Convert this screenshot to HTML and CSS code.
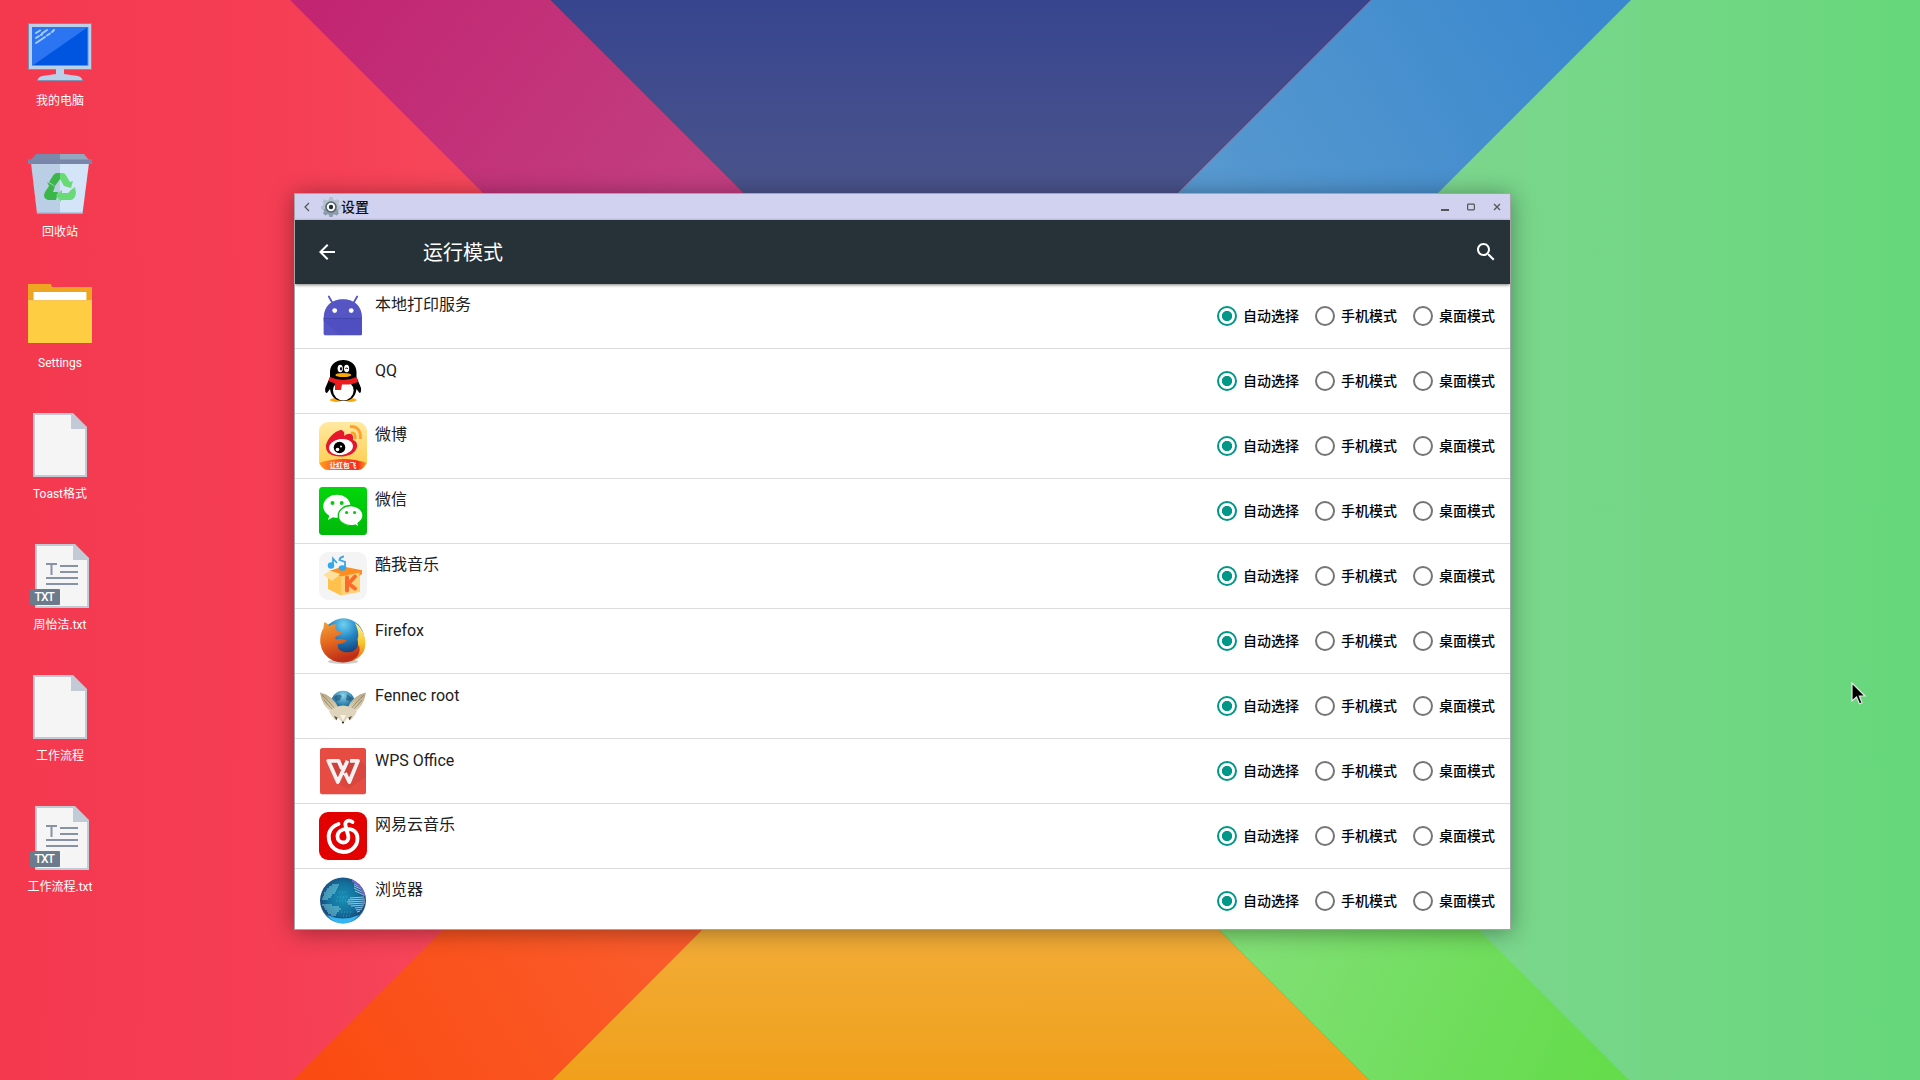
FILE: index.html
```html
<!DOCTYPE html>
<html lang="zh-CN">
<head>
<meta charset="utf-8">
<title>设置</title>
<link rel="stylesheet" href="styles.css">
</head>
<body>
<svg class="wallpaper" viewBox="0 0 1920 1080" aria-hidden="true">
  <defs>
    <linearGradient id="wRed"><stop offset="0" stop-color="#f4394f"/><stop offset=".5" stop-color="#f53d53"/><stop offset="1" stop-color="#f7495b"/></linearGradient>
    <linearGradient id="wGreen"><stop offset="0" stop-color="#7fd690"/><stop offset="1" stop-color="#66d77a"/></linearGradient>
    <linearGradient id="wBlue" gradientUnits="userSpaceOnUse" x1="0" y1="0" x2="0" y2="193"><stop offset="0" stop-color="#37458f"/><stop offset="1" stop-color="#4a548b"/></linearGradient>
    <linearGradient id="wYellow" gradientUnits="userSpaceOnUse" x1="0" y1="930" x2="0" y2="1080"><stop offset="0" stop-color="#f2ac37"/><stop offset="1" stop-color="#f0a01b"/></linearGradient>
    <linearGradient id="wMagenta" gradientUnits="userSpaceOnUse" x1="340" y1="0" x2="640" y2="240"><stop offset="0" stop-color="#c22673"/><stop offset="1" stop-color="#c23e80"/></linearGradient>
    <linearGradient id="wSky" gradientUnits="userSpaceOnUse" x1="1590" y1="0" x2="1240" y2="220"><stop offset="0" stop-color="#3a88ce"/><stop offset="1" stop-color="#5698cf"/></linearGradient>
    <linearGradient id="wOrange" gradientUnits="userSpaceOnUse" x1="330" y1="1080" x2="620" y2="900"><stop offset="0" stop-color="#fa4c12"/><stop offset="1" stop-color="#fa5b2b"/></linearGradient>
    <linearGradient id="wLime" gradientUnits="userSpaceOnUse" x1="1270" y1="920" x2="1600" y2="1080"><stop offset="0" stop-color="#80df74"/><stop offset="1" stop-color="#64dc4b"/></linearGradient>
  </defs>
  <rect width="520" height="1080" fill="url(#wRed)"/>
  <rect x="1400" width="520" height="1080" fill="url(#wGreen)"/>
  <path d="M550 0H1371L1111 260H810Z" fill="url(#wBlue)"/>
  <path d="M552 1080L851 780H1069L1369 1080Z" fill="url(#wYellow)"/>
  <path d="M290 0H550L810 260H550Z" fill="url(#wMagenta)"/>
  <path d="M1371 0H1631L1371 260H1111Z" fill="url(#wSky)"/>
  <path d="M293 1080L553 820H812L552 1080Z" fill="url(#wOrange)"/>
  <path d="M1629 1080L1369 820H1109L1369 1080Z" fill="url(#wLime)"/>
</svg>

<svg class="defs" aria-hidden="true">
  <symbol id="doc" viewBox="0 0 64 64">
    <path d="M5 0H45L59 14V64H5Z" fill="#c2cad5"/>
    <path d="M7 2H43V16H57V62H7Z" fill="#f5f5f5"/>
  </symbol>
  <symbol id="txt" viewBox="0 0 64 64">
    <path d="M7 0H47L61 14V64H7Z" fill="#c2cad5"/>
    <path d="M9 2H45V16H59V62H9Z" fill="#f5f5f5"/>
    <path d="M18 20H29M23.500 20V31M32 22H50M32 28H50M18 34H50M18 40H50" fill="none" stroke="#8792a6" stroke-width="2"/>
    <rect x="2" y="45" width="30" height="16" rx="1" fill="#6c7b8b"/>
  </symbol>
</svg>

<main class="desktop">
  <nav class="shortcuts">
    <a class="shortcut">
      <svg class="shortcut-icon" viewBox="0 0 64 64">
        <path d="M.5 3.500H63.500V49.500H.5Z" fill="#bacfe8" stroke="#7c8bb0"/>
        <path d="M28 49H36V54L50 56Q54 57 54.500 60.500H9.500Q10 57 14 56L28 54Z" fill="#bacfe8"/>
        <path d="M9 60.500H55" stroke="#8291b3"/>
        <path d="M4 7H60V46H4Z" fill="#2b75f2"/><path d="M60 7V46H4Z" fill="#0055e0"/>
        <path d="M4 45.500H60V7" fill="none" stroke="#5995ef"/>
        <path d="M8 13L12 10.500M14 13.500L19 10M8 18L11 16M13 15L14 14.500M8 23L17 17M19 15.500L22 13.500M24 12L26 10" stroke="#a5cbff" stroke-width="2" stroke-linecap="round"/>
      </svg>
      <span class="shortcut-label">我的电脑</span>
    </a>
    <a class="shortcut">
      <svg class="shortcut-icon" viewBox="0 0 64 64">
        <path d="M3 12H32V62.500H9Z" fill="#bacfe5"/><path d="M32 12H61L54.500 62.500H32Z" fill="#d4e4f9"/>
        <path d="M9 62H55" stroke="#95a9c6"/>
        <path d="M8 3H32V9H3Z" fill="#7a89a9"/><path d="M32 3H56L61 9H32Z" fill="#93a7bf"/><path d="M0 8.500H64V13H0Z" fill="#7887a9"/>
        <path d="M29 22H32V28L27 35L21 31L25.500 24Q27 22 29 22ZM19 31L27 35.500L25 41H30L28 49H20Q14 47 17 41L21 35Z" fill="#3cb54a"/>
        <path d="M32 22H35Q37 22 38.500 25L42 31L45 30L43 37L36 35L32 28ZM43 39L47 36L48 42Q47 48 43 49H33V51L28 44L34 39V42H40Z" fill="#68da76"/>
      </svg>
      <span class="shortcut-label">回收站</span>
    </a>
    <a class="shortcut">
      <svg class="shortcut-icon" viewBox="0 0 64 64">
        <path d="M0 2H23L24 5H64V30H0Z" fill="#eea522"/><path d="M5 10H59V20H5Z" fill="#f8c968"/><path d="M6 10H58V20H6Z" fill="#fff"/>
        <path d="M0 18H64V61H0Z" fill="#ffcd42"/><path d="M0 18.500H64" stroke="#f7c458"/>
      </svg>
      <span class="shortcut-label">Settings</span>
    </a>
    <a class="shortcut"><svg class="shortcut-icon"><use href="#doc"/></svg><span class="shortcut-label">Toast格式</span></a>
    <a class="shortcut"><svg class="shortcut-icon"><use href="#txt"/><text x="6.500" y="57" class="txt-tag">TXT</text></svg><span class="shortcut-label">周怡洁.txt</span></a>
    <a class="shortcut"><svg class="shortcut-icon"><use href="#doc"/></svg><span class="shortcut-label">工作流程</span></a>
    <a class="shortcut"><svg class="shortcut-icon"><use href="#txt"/><text x="6.500" y="57" class="txt-tag">TXT</text></svg><span class="shortcut-label">工作流程.txt</span></a>
  </nav>

  <section class="window">
    <header class="titlebar">
      <svg class="tb-back" width="8" height="10" viewBox="0 0 8 10"><path d="M6 1L2 5L6 9" fill="none" stroke="#555" stroke-width="1.200"/></svg>
      <svg class="tb-gear" width="20" height="20" viewBox="0 0 20 20">
        <path d="M8.300 0H11.700L12.200 2.500L14.500 3.500L16.600 2L18.600 4.500L17.300 6.500L17.800 8.200L20 9V12L17.700 12.600L16.900 14.400L17.900 16.500L15.600 18.400L13.600 17.200L12 17.800L11.500 20H8.500L8 17.800L6.400 17.200L4.400 18.400L2.100 16.500L3.100 14.400L2.300 12.600L0 12V9L2.200 8.200L2.700 6.500L1.400 4.500L3.400 2L5.500 3.500L7.800 2.500Z" fill="#b3c1cc"/>
        <path d="M2.300 12H17.700L16.900 14.400L17.900 16.500L15.600 18.400L13.600 17.200L12 17.800L11.500 20H8.500L8 17.800L6.400 17.200L4.400 18.400L2.100 16.500L3.100 14.400Z" fill="#8b9cab"/>
        <circle cx="10" cy="10" r="5" fill="#fff" stroke="#53606c" stroke-width="1.600"/><circle cx="10" cy="10" r="2.200" fill="#222b33"/>
      </svg>
      <h1 class="tb-title">设置</h1>
      <svg class="tb-controls" width="60" height="10" viewBox="0 0 60 10" fill="none" stroke="#555">
        <path d="M0 8H8" stroke-width="2"/><rect x="26.600" y="2.100" width="6.800" height="5.800" rx=".8" stroke-width="1.200"/><path d="M53 2L59 8M59 2L53 8" stroke-width="1.300"/>
      </svg>
    </header>

    <div class="appbar">
      <svg class="appbar-icon" viewBox="0 0 24 24"><path d="M20 11H7.830l5.590-5.590L12 4l-8 8 8 8 1.410-1.410L7.830 13H20v-2z"/></svg>
      <h2 class="appbar-title">运行模式</h2>
      <svg class="appbar-icon" viewBox="0 0 24 24"><path d="M15.500 14h-.79l-.28-.27C15.410 12.590 16 11.110 16 9.500 16 5.910 13.090 3 9.500 3S3 5.910 3 9.500 5.910 16 9.500 16c1.610 0 3.090-.59 4.230-1.570l.27.28v.79l5 4.990L20.490 19l-4.990-5zm-6 0C7.010 14 5 11.990 5 9.500S7.010 5 9.500 5 14 7.010 14 9.500 11.990 14 9.500 14z"/></svg>
    </div>

    <ul class="apps">
      <li class="app">
        <svg class="app-icon" viewBox="0 0 48 48">
          <path d="M4.700 26C4.700 14 13 7.300 24 7.300S43 14 43 26V42Q43 43.800 41.500 43.800H6.200Q4.700 43.800 4.700 42Z" fill="#25258a" opacity=".3"/>
          <path d="M4.700 26C4.700 14 13 7.300 24 7.300S43 14 43 26V41.500Q43 43 41.500 43H6.200Q4.700 43 4.700 41.500Z" fill="#5556c4"/>
          <path d="M4.700 26.500H43V41.500Q43 43 41.500 43H20L4.700 29Z" fill="#4f4fc2"/><path d="M4.700 26.500H43" stroke="#4142a8" stroke-width=".8"/>
          <path d="M9.800 4.500L13.500 11M38.200 4.500L34.500 11" stroke="#5556c4" stroke-width="1.800" stroke-linecap="round"/>
          <circle cx="15.700" cy="18.600" r="2.400" fill="#fff"/><circle cx="32.200" cy="18.600" r="2.400" fill="#fff"/>
        </svg>
        <span class="app-name">本地打印服务</span>
        <div class="modes"><label class="mode on">自动选择</label><label class="mode">手机模式</label><label class="mode">桌面模式</label></div>
      </li>
      <li class="app">
        <svg class="app-icon" viewBox="0 0 48 48">
          <ellipse cx="17" cy="43" rx="6" ry="1.900" fill="#fba90a"/><ellipse cx="31.500" cy="43" rx="6" ry="1.900" fill="#fba90a"/>
          <path d="M24.300 3C31 3 37.500 7 37.500 15V20L42 31Q42.500 36 40.500 36L37.500 32Q36 44 24.300 44T11 32L8 36Q5.500 36 6.300 31L11 20V15C11 7 17.500 3 24.300 3Z" fill="#000"/>
          <ellipse cx="24.300" cy="33.500" rx="10.300" ry="10" fill="#fff"/>
          <path d="M11 20Q24 26 37.500 20L39 25Q33 28 23 27.500L22 33H16V26.500L9.300 24Z" fill="#ed1c1f"/>
          <ellipse cx="21.200" cy="11.500" rx="2.600" ry="3.800" fill="#fff"/><ellipse cx="27.600" cy="11.500" rx="2.600" ry="3.800" fill="#fff"/>
          <ellipse cx="22" cy="11.700" rx="1" ry="1.700"/><path d="M26.500 12Q27.500 9.500 28.800 12" fill="none" stroke="#000"/>
          <ellipse cx="24.300" cy="18" rx="8" ry="2.100" fill="#fba90a"/>
        </svg>
        <span class="app-name latin">QQ</span>
        <div class="modes"><label class="mode on">自动选择</label><label class="mode">手机模式</label><label class="mode">桌面模式</label></div>
      </li>
      <li class="app">
        <svg class="app-icon" viewBox="0 0 48 48">
          <defs><linearGradient id="wb" x1="0" y1="0" x2="0" y2="1"><stop offset="0" stop-color="#ffe9a2"/><stop offset="1" stop-color="#ffcb46"/></linearGradient><clipPath id="wbClip"><rect width="48" height="48" rx="9"/></clipPath>
          <linearGradient id="wbBanner"><stop offset="0" stop-color="#ff9a1c"/><stop offset=".5" stop-color="#fb4b22"/><stop offset=".8" stop-color="#f52a24"/><stop offset="1" stop-color="#ffa41c"/></linearGradient></defs>
          <rect width="48" height="48" rx="9" fill="url(#wb)"/>
          <path d="M0 41Q24 33 48 41L42 48H6Z" fill="url(#wbBanner)" clip-path="url(#wbClip)"/>
          <path d="M7 25C7 17 17 8 22.500 8C25 9 26 11 25 14C29 11 34 11 34 15V18C37 19 38.500 21 38 25C36 32 29 34.500 21 34.500C13 34.500 7 31 7 25Z" fill="#e6162d"/>
          <ellipse cx="22" cy="25" rx="12" ry="8" fill="#fff" transform="rotate(-7 22 25)"/><circle cx="20.500" cy="25.500" r="5.800"/><circle cx="18.500" cy="27.500" r="1.800" fill="#fff"/><circle cx="22" cy="24.500" r="1" fill="#fff"/>
          <path d="M31 4.500Q42 4 41.500 17M32 11Q37 10 36 17" fill="none" stroke="#ff9f2e" stroke-width="2.800"/>
          <text x="24" y="45.700" class="wb-text">让红包飞</text>
        </svg>
        <span class="app-name">微博</span>
        <div class="modes"><label class="mode on">自动选择</label><label class="mode">手机模式</label><label class="mode">桌面模式</label></div>
      </li>
      <li class="app">
        <svg class="app-icon" viewBox="0 0 48 48">
          <defs><linearGradient id="wx" x1="0" y1="0" x2="0" y2="1"><stop offset="0" stop-color="#00d70a"/><stop offset="1" stop-color="#00b90a"/></linearGradient></defs>
          <rect width="48" height="48" rx="3.500" fill="url(#wx)"/>
          <path d="M18 7.800C25.500 7.800 31.500 12.700 31.500 19.500S25.500 30.800 18 30.800Q16 30.800 14 30.300L9 33L10.300 28.800Q4.300 25 4.300 19.500C4.300 12.700 10.500 7.800 18 7.800Z" fill="#fff"/>
          <path d="M31.700 18.500C38.500 18.500 44 23 44 28.700Q44 32.500 39 36.300L40 40L36 38Q34 38.600 31.700 38.600C25 38.600 19.300 34.500 19.300 28.700S25 18.500 31.700 18.500Z" fill="#fff" stroke="#00c60a" stroke-width="1.300"/>
          <g fill="#07c910"><circle cx="13.500" cy="16" r="2"/><circle cx="22.700" cy="16" r="2"/><circle cx="27.600" cy="25.500" r="1.600"/><circle cx="35.600" cy="25.500" r="1.600"/></g>
        </svg>
        <span class="app-name">微信</span>
        <div class="modes"><label class="mode on">自动选择</label><label class="mode">手机模式</label><label class="mode">桌面模式</label></div>
      </li>
      <li class="app">
        <svg class="app-icon" viewBox="0 0 48 48">
          <rect width="48" height="48" rx="9" fill="#f4f4f4"/>
          <path d="M10 19L24 14.500L42 18L41 22L22 25Z" fill="#ff8c1f"/>
          <path d="M9 25L22 24V43.500L9 37Z" fill="#ffc14b"/><path d="M22 24.500L41 20.500V40L22 43.500Z" fill="#ffd27a"/>
          <path d="M11 18.500L4.500 23L13 29L21.500 22Z" fill="#ffe09a"/><path d="M41 18H43V22L40 24Z" fill="#ff8c2a"/>
          <path d="M28 25.500V38.500M36 24.500L29.500 31.500L36 36.500" fill="none" stroke="#fb6a2b" stroke-width="4" stroke-linecap="round" stroke-linejoin="round"/>
          <g fill="none" stroke="#38a7e8" stroke-width="1.800"><path d="M14 14V6.500L18 11M26 16V10L20.500 8Q21 5 25 4.500"/></g>
          <g fill="#2faaf0"><circle cx="12" cy="13.500" r="3.200"/><ellipse cx="23.500" cy="16" rx="3.800" ry="2.800"/></g>
        </svg>
        <span class="app-name">酷我音乐</span>
        <div class="modes"><label class="mode on">自动选择</label><label class="mode">手机模式</label><label class="mode">桌面模式</label></div>
      </li>
      <li class="app">
        <svg class="app-icon" viewBox="0 0 48 48">
          <defs><radialGradient id="ffB" cx=".5" cy=".15" r=".75"><stop offset="0" stop-color="#6fd0f2"/><stop offset=".45" stop-color="#2586c4"/><stop offset="1" stop-color="#12376f"/></radialGradient>
          <linearGradient id="ffO" x1="0" y1="0" x2=".3" y2="1"><stop offset="0" stop-color="#f3a13c"/><stop offset=".5" stop-color="#e56a1f"/><stop offset="1" stop-color="#bf2f17"/></linearGradient>
          <linearGradient id="ffY" x1="0" y1="0" x2="0" y2="1"><stop offset="0" stop-color="#fff4a0"/><stop offset=".5" stop-color="#f9c62c"/><stop offset="1" stop-color="#e3661d"/></linearGradient></defs>
          <ellipse cx="24" cy="44.500" rx="15" ry="2.500" fill="#000" opacity=".2"/>
          <circle cx="24.500" cy="22" r="20.700" fill="url(#ffB)"/>
          <path d="M36 6C44 11 49 23 45 34C40 43 31 46 23 45C34 42 41 34 38.500 22Q41 17 36 6Z" fill="url(#ffY)"/>
          <path d="M5 5.500Q8 5 10 9Q14 6.500 17.500 7.500Q15 10 18 14L23 14.500Q23 17 18 19Q15 21 17 22.500Q23 21 28 23.500Q24 27 19 27Q17 32 25 35Q35 37 40 28Q43 38 33 43.500Q24 47 15 44Q3 39 1.300 26Q.7 17 4.500 11Z" fill="url(#ffO)"/>
        </svg>
        <span class="app-name latin">Firefox</span>
        <div class="modes"><label class="mode on">自动选择</label><label class="mode">手机模式</label><label class="mode">桌面模式</label></div>
      </li>
      <li class="app">
        <svg class="app-icon" viewBox="0 0 48 48">
          <defs><radialGradient id="fnB" cx=".5" cy=".2" r=".8"><stop offset="0" stop-color="#8cd6ef"/><stop offset=".5" stop-color="#2f80ab"/><stop offset="1" stop-color="#0f3354"/></radialGradient>
          <linearGradient id="fnE" x1="0" y1="0" x2="0" y2="1"><stop offset="0" stop-color="#b5a582"/><stop offset="1" stop-color="#e6dcc4"/></linearGradient></defs>
          <circle cx="24" cy="20.500" r="11.800" fill="url(#fnB)"/><path d="M15 15Q20 11 23 14L21 18L17 19ZM28 12L33 16L31 19L27 18Z" fill="#123e60" opacity=".5"/>
          <path d="M1 10.500Q14 13 20 27L14 31Q3 25 1 10.500ZM47 10.500Q34 13 28 27L34 31Q45 25 47 10.500Z" fill="url(#fnE)"/>
          <path d="M3 13Q10 19 16 27M5 18Q9 23 14 28M45 13Q38 19 32 27M43 18Q39 23 34 28" stroke="#8d7c5e" stroke-width=".8" fill="none"/>
          <path d="M10 29L17 25Q24 22 31 25L38 29L36 33L32 38L28.500 36L24 41.500L19.500 36L16 38L12 33Z" fill="#dfd4bc"/>
          <path d="M15 34L18.500 35.500L17.500 38.500ZM33 34L29.500 35.500L30.500 38.500Z" fill="#56493a"/><path d="M21 33H27L24 39Z" fill="#f7f2e8"/><circle cx="24" cy="40.500" r="1" fill="#222"/>
        </svg>
        <span class="app-name latin">Fennec root</span>
        <div class="modes"><label class="mode on">自动选择</label><label class="mode">手机模式</label><label class="mode">桌面模式</label></div>
      </li>
      <li class="app">
        <svg class="app-icon" viewBox="0 0 48 48">
          <rect x="1" y="1.600" width="46" height="46" rx="2.500" fill="#a23a32" opacity=".5"/><rect x="1" y="1" width="46" height="46" rx="2.500" fill="#e64c41"/>
          <path d="M41 13L47 19V30L29 42L20 37Z" fill="#c9413a" opacity=".4"/>
          <path d="M11 14H37L30 34L25 27L19 34Z" fill="#cf4038"/>
          <path d="M23 22L19.500 13.800H9.300L18.800 35L28.500 13.800M31 13.800H39L30.300 35L26 26" fill="none" stroke="#f6f1f3" stroke-width="3.800" stroke-linejoin="round"/>
        </svg>
        <span class="app-name latin">WPS Office</span>
        <div class="modes"><label class="mode on">自动选择</label><label class="mode">手机模式</label><label class="mode">桌面模式</label></div>
      </li>
      <li class="app">
        <svg class="app-icon" viewBox="0 0 48 48">
          <rect width="48" height="48" rx="9" fill="#e20000"/>
          <path d="M19.500 12C12 14.500 8.500 21 10 28C11.500 35.500 18 40 24.500 40C32 40 38.500 34.500 38.500 26.500C38.500 20 34 16.800 28 16.800C22 16.800 18.500 20.500 18.500 24.500C18.500 28 21 30.500 24 30.500C28 30.500 30 27.500 29.300 24L26.500 13.500C25.500 9.500 29.500 7 33.500 10" fill="none" stroke="#fff" stroke-width="3.800" stroke-linecap="round"/>
        </svg>
        <span class="app-name">网易云音乐</span>
        <div class="modes"><label class="mode on">自动选择</label><label class="mode">手机模式</label><label class="mode">桌面模式</label></div>
      </li>
      <li class="app">
        <svg class="app-icon" viewBox="0 0 48 48">
          <defs><radialGradient id="br" cx=".5" cy=".45" r=".55"><stop offset="0" stop-color="#1a90b6"/><stop offset=".6" stop-color="#12709c"/><stop offset=".9" stop-color="#1b4a7b"/><stop offset="1" stop-color="#4e9fca"/></radialGradient></defs>
          <circle cx="24" cy="23.500" r="23" fill="url(#br)"/>
          <path d="M8 38Q24 45 40 38Q33 46.500 24 46.500T8 38Z" fill="#35b6f2"/>
          <path d="M13 8H20M10 10H19M8 12H18M7 14H17M5 16H16M5 18H13M4 20H12M3 22H9M3 28H13M5 30H20M6 32H22M8 34H20M9 36H18M12 38H17" stroke="#8fe0e8" stroke-width="1" opacity=".85"/>
          <path d="M35 7L39 9M35 9L42 12M35 11L43 15M36 14L45 18M31 21L45 20M29 23L46 22M28 25L46 24M29 27L46 26M32 29L45 28M36 31L44 30M37 33L43 32M38 35L41 34" stroke="#b2d3f2" stroke-width="1" opacity=".85"/>
          <path d="M33 3.500Q43 9 45.500 19" fill="none" stroke="#9a6ce0" stroke-width="2" opacity=".7"/>
          <path d="M18 20H28M17 24H27M22 35H34M24 39H33M20 15H29" stroke="#49b4cc" stroke-dasharray="1 2" opacity=".7"/>
        </svg>
        <span class="app-name">浏览器</span>
        <div class="modes"><label class="mode on">自动选择</label><label class="mode">手机模式</label><label class="mode">桌面模式</label></div>
      </li>
    </ul>
  </section>
</main>

<svg class="cursor" viewBox="0 0 16 24"><path d="M1 1V19L5.500 15L8.500 22L11 20.800L8.300 14H14Z" fill="#000" stroke="#e6e6e6" stroke-width="1.200"/></svg>
</body>
</html>
```

FILE: styles.css
```css
*, *::before { box-sizing: border-box; }

body {
  margin: 0;
  width: 1920px;
  height: 1080px;
  overflow: hidden;
  position: relative;
  background: #f53b52;
  font-family: Roboto, "Noto Sans CJK SC", sans-serif;
}

.wallpaper {
  position: absolute;
  inset: 0;
  width: 1920px;
  height: 1080px;
}

.defs { position: absolute; width: 0; height: 0; }

.desktop { position: relative; height: 1080px; }

/* Desktop shortcuts */
.shortcuts {
  display: flex;
  flex-direction: column;
  width: 120px;
  padding-top: 20px;
}

.shortcut {
  display: flex;
  flex-direction: column;
  align-items: center;
  height: 131px;
  gap: 8px;
}

.shortcut-icon { width: 64px; height: 64px; flex: none; }

.shortcut-label {
  color: #fff;
  font-size: 12px;
  line-height: 18px;
  white-space: nowrap;
}

.txt-tag { font-size: 12px; font-weight: 500; letter-spacing: -0.9px; fill: #fff; }
.wb-text { font-size: 6.7px; font-weight: 700; fill: #fff; text-anchor: middle; }

/* Settings window, floating on the desktop */
.window {
  position: absolute;
  left: 294px;
  top: 193px;
  width: 1217px;
  height: 737px;
  display: flex;
  flex-direction: column;
  border: 1px solid #a3a3a8;
  background: #fff;
  box-shadow: 0 2px 22px rgba(0, 0, 0, 0.38);
  overflow: hidden;
}

.titlebar {
  display: flex;
  align-items: center;
  flex: none;
  height: 26px;
  padding: 0 9px 0 8px;
  background: #d1d1f0;
}

.tb-gear { margin-left: 10px; }
.tb-title { flex: 1; margin: 0; font-size: 14px; line-height: 20px; font-weight: 500; color: #111; }

.appbar {
  position: relative;
  z-index: 1;
  display: flex;
  align-items: center;
  flex: none;
  height: 64px;
  padding: 0 12px 0 20px;
  background: #263238;
  box-shadow: 0 1px 3px rgba(0, 0, 0, 0.5);
}

.appbar-icon { width: 24px; height: 24px; fill: #fff; }
.appbar-title { flex: 1; margin: 0 0 0 84px; padding-top: 1px; font-size: 20px; line-height: 28px; font-weight: 400; color: #fff; }

/* Application list */
.apps { margin: 0; padding: 0; list-style: none; }

.app {
  display: flex;
  align-items: flex-start;
  height: 65px;
  padding: 8px 15px 0 24px;
  border-bottom: 1px solid #dcdcdc;
}

.app-icon { flex: none; width: 48px; height: 48px; }

.app-name {
  flex: 1;
  margin-left: 8px;
  padding-top: 1px;
  font-size: 16px;
  line-height: 24px;
  color: #212121;
}

.app-name.latin { padding-top: 2px; }

.modes { display: flex; gap: 10px; height: 48px; align-items: center; }

.mode {
  display: flex;
  align-items: center;
  width: 88px;
  font-size: 14px;
  line-height: 20px;
  font-weight: 500;
  color: #000;
  white-space: nowrap;
}

.mode::before {
  content: "";
  width: 20px;
  height: 20px;
  margin: 0 6px;
  flex: none;
  border: 2px solid #757575;
  border-radius: 50%;
}

.mode.on::before {
  border-color: #009688;
  background: radial-gradient(circle, #009688 4.800px, transparent 5.400px);
}

.cursor {
  position: absolute;
  left: 1851px;
  top: 682px;
  width: 16px;
  height: 24px;
}
```
